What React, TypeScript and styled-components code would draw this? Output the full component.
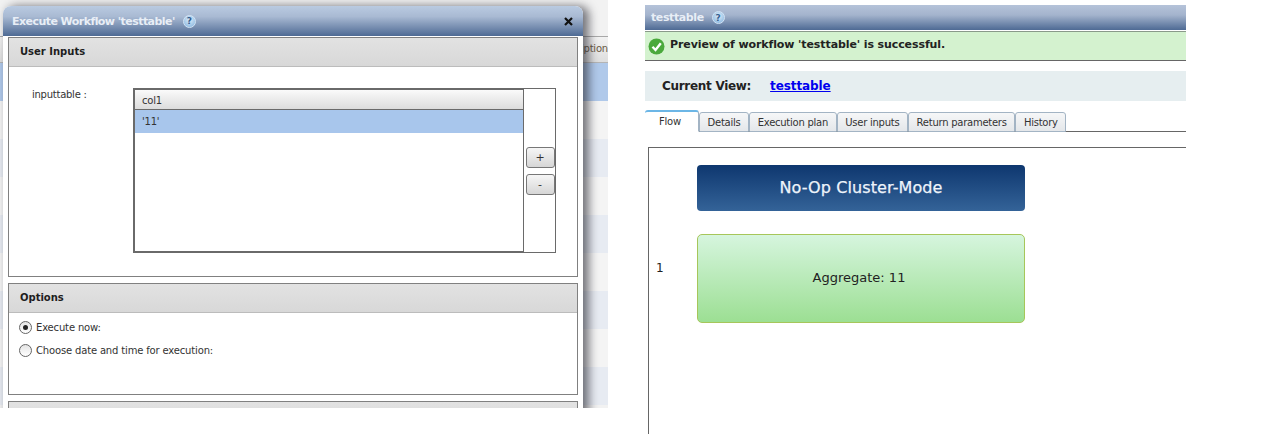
import styled, { createGlobalStyle } from "styled-components";

const Global = createGlobalStyle`
    html, body {
        margin: 0;
        padding: 0;
        background: #fff;
    }
    body {
        width: 1274px;
        height: 442px;
        overflow: hidden;
        font-family: "DejaVu Sans", Verdana, sans-serif;
        font-size: 10px;
        color: #222;
    }
`;

const Page = styled.div`
    display: flex;
    width: 1274px;
    height: 442px;
    overflow: hidden;
`;

const Stage = styled.div`
    position: relative;
    flex: none;
    width: 608px;
    height: 408px;
    overflow: hidden;
    background: #f2f2f2;
`;

const BackHeader = styled.div`
    height: 25px;
    margin-top: 36px;
    border-top: 1px solid #a8a8a8;
    border-bottom: 1px solid #b4b4b4;
    background: linear-gradient(#f2f2f2, #dedede);
    text-align: right;
    line-height: 24px;
    color: #6b5a45;
    letter-spacing: -0.2px;
    white-space: nowrap;
    overflow: hidden;
`;

const BackRow = styled.div<{ $tone: string }>`
    height: 38px;
    background: ${(p) => p.$tone};
`;

const Dialog = styled.div`
    position: absolute;
    left: 3px;
    top: 6px;
    width: 580px;
    height: 440px;
    background: #fff;
    border-radius: 8px 8px 0 0;
    box-shadow: 5px 1px 10px 1px rgba(40, 40, 50, 0.62);
`;

const DialogBar = styled.div`
    display: flex;
    align-items: center;
    height: 30px;
    padding: 0 9px;
    border-radius: 8px 8px 0 0;
    background: linear-gradient(#b9cae1, #a9bad3 35%, #4e6a94);
`;

const DialogTitle = styled.span`
    font-size: 11px;
    font-weight: bold;
    color: #e8eef6;
    letter-spacing: -0.55px;
`;

const SideTitle = styled(DialogTitle)`
    letter-spacing: -0.4px;
`;

const HelpIcon = styled.span`
    display: inline-flex;
    align-items: center;
    justify-content: center;
    width: 11px;
    height: 11px;
    margin-left: 8px;
    border-radius: 50%;
    border: 1px solid #d2e4f5;
    background: radial-gradient(circle at 50% 35%, #dcecf9, #7fb0dd);
    color: #35608f;
    font-size: 9px;
    font-weight: bold;
`;

const CloseIcon = styled.svg`
    margin-left: auto;
    margin-right: 1px;
`;

const DialogBody = styled.div`
    display: flex;
    flex-direction: column;
    gap: 6px;
    padding: 1px 5px 0;
`;

const Panel = styled.section<{ $height: number }>`
    flex: none;
    height: ${(p) => p.$height}px;
    box-sizing: border-box;
    border: 1px solid #808080;
    background: #fff;
`;

const PanelHead = styled.div`
    height: 28px;
    padding-left: 11px;
    border-bottom: 1px solid #bcbcbc;
    background: linear-gradient(#e2e2e2, #d8d8d8);
    font-size: 10px;
    font-weight: bold;
    line-height: 27px;
    color: #1e1e1e;
`;

const InputRow = styled.div`
    display: flex;
    padding: 21px 0 0 23px;
`;

const InputLabel = styled.span`
    flex: none;
    width: 101px;
    line-height: 13px;
    letter-spacing: -0.25px;
    color: #333;
`;

const Grid = styled.div`
    flex: none;
    width: 390px;
    height: 165px;
    box-sizing: border-box;
    border: 2px solid #6a6a6a;
    border-right: none;
`;

const GridHead = styled.div`
    height: 19px;
    padding-left: 7px;
    border-bottom: 1px solid #6a6a6a;
    background: linear-gradient(#fafafa, #dcdcdc);
    line-height: 21px;
    letter-spacing: -0.2px;
    color: #333;
`;

const GridRow = styled.div`
    height: 23px;
    padding-left: 7px;
    background: #a8c6ec;
    line-height: 23px;
    letter-spacing: -0.2px;
    color: #333;
`;

const GridSide = styled.div`
    display: flex;
    flex-direction: column;
    align-items: center;
    gap: 6px;
    flex: none;
    width: 33px;
    height: 165px;
    box-sizing: border-box;
    padding: 58px 0 0 1px;
    border: 1px solid #6a6a6a;
`;

const SmallButton = styled.button`
    width: 29px;
    height: 21px;
    padding: 0;
    border: 1px solid #777;
    border-radius: 3px;
    background: linear-gradient(#f6f6f6, #d6d6d6);
    font-family: inherit;
    font-size: 11px;
    color: #333;
`;

const OptionList = styled.div`
    display: flex;
    flex-direction: column;
    gap: 10px;
    padding: 8px 0 0 10px;
`;

const OptionRow = styled.label`
    display: flex;
    align-items: center;
    gap: 4px;
    height: 13px;
    letter-spacing: -0.16px;
    color: #333;
`;

const Radio = styled.span<{ $on?: boolean }>`
    display: flex;
    align-items: center;
    justify-content: center;
    width: 11px;
    height: 11px;
    border: 1px solid #666;
    border-radius: 50%;
    background: linear-gradient(#e4e4e4, #fff);

    &::after {
        content: "";
        width: 5px;
        height: 5px;
        border-radius: 50%;
        background: ${(p) => (p.$on ? "#222" : "transparent")};
    }
`;

const Side = styled.div`
    display: flex;
    flex-direction: column;
    flex: none;
    width: 541px;
    height: 434px;
    margin-left: 37px;
    padding-top: 5px;
    box-sizing: border-box;
    overflow: hidden;
`;

const TitleBar = styled.div`
    display: flex;
    align-items: center;
    flex: none;
    height: 25px;
    padding: 0 6px;
    background: linear-gradient(#b5c3d9, #a4b4cd 40%, #4e6a94);
`;

const Notice = styled.div`
    display: flex;
    align-items: center;
    flex: none;
    height: 30px;
    margin-top: 1px;
    padding-left: 3px;
    box-sizing: border-box;
    border-top: 1px solid #8a9a8a;
    border-bottom: 1px solid #666;
    background: #d4f2cf;
    font-size: 11px;
    font-weight: bold;
    letter-spacing: -0.1px;
    color: #222;
`;

const NoticeIcon = styled.svg`
    flex: none;
    margin-right: 5px;
`;

const NoticeText = styled.span`
    margin-bottom: 4px;
`;

const ViewBar = styled.div`
    display: flex;
    align-items: center;
    flex: none;
    height: 30px;
    margin-top: 10px;
    padding-left: 17px;
    background: #e6eef0;
    font-size: 12px;
    font-weight: bold;
    letter-spacing: -0.3px;
    color: #222;
`;

const ViewLink = styled.a`
    margin-left: 19px;
    letter-spacing: -0.1px;
    color: #0000ee;
    text-decoration: underline;
`;

const TabStrip = styled.div`
    display: flex;
    align-items: flex-end;
    flex: none;
    height: 22px;
    margin-top: 9px;
    border-bottom: 1px solid #666;
    box-sizing: border-box;
`;

const Tab = styled.div<{ $active?: boolean }>`
    display: flex;
    align-items: center;
    justify-content: center;
    flex: none;
    width: ${(p) => (p.$active ? "54px" : "auto")};
    height: ${(p) => (p.$active ? "22px" : "20px")};
    padding: ${(p) => (p.$active ? "0 3px 0 0" : "0 7.6px")};
    box-sizing: border-box;
    margin-bottom: -1px;
    border: 1px solid #a3b4c4;
    border-left: ${(p) => (p.$active ? "none" : "1px solid #a3b4c4")};
    border-top: ${(p) => (p.$active ? "2px solid #6cb6e6" : "1px solid #a3b4c4")};
    border-bottom: ${(p) => (p.$active ? "1px solid #fff" : "1px solid #a3b4c4")};
    border-radius: 3px 3px 0 0;
    background: ${(p) => (p.$active ? "#fff" : "linear-gradient(#f6f7f8, #e4e7ea)")};
    letter-spacing: -0.25px;
    color: #333;
    white-space: nowrap;
`;

const FlowBox = styled.div`
    display: flex;
    flex: 1;
    margin: 15px -2px 0 3px;
    border: 1px solid #666;
    border-bottom: none;
`;

const RowNumber = styled.div`
    flex: none;
    width: 48px;
    padding: 114px 0 0 7px;
    box-sizing: border-box;
    font-size: 12px;
    line-height: 13px;
    color: #222;
`;

const Nodes = styled.div`
    display: flex;
    flex-direction: column;
    gap: 23px;
    padding-top: 17px;
`;

const ClusterNode = styled.div`
    display: flex;
    align-items: center;
    justify-content: center;
    width: 328px;
    height: 46px;
    padding-bottom: 2px;
    box-sizing: border-box;
    border-radius: 4px;
    background: linear-gradient(#0e376f, #346398);
    font-size: 16px;
    letter-spacing: 0.1px;
    color: #eef4fb;
    -webkit-text-stroke: 0.25px #eef4fb;
`;

const AggregateNode = styled.div`
    display: flex;
    align-items: center;
    justify-content: center;
    width: 328px;
    height: 89px;
    padding: 0 4px 2px 0;
    box-sizing: border-box;
    border: 1px solid #a6c65a;
    border-radius: 5px;
    background: linear-gradient(#d6f5de, #9cdf93);
    font-size: 13px;
    color: #222;
`;

const tabs = ["Details", "Execution plan", "User inputs", "Return parameters", "History"];
const rows = ["#b0c9ea", "#f4f4f4", "#e7ebf2", "#f4f4f4", "#e7ebf2", "#f4f4f4", "#e7ebf2", "#f4f4f4", "#e7ebf2"];

const App = () => {
    return (
        <>
            <Global />
            <Page>
                <Stage>
                    <BackHeader>iption</BackHeader>
                    {rows.map((tone, i) => (
                        <BackRow key={i} $tone={tone} />
                    ))}
                    <Dialog>
                        <DialogBar>
                            <DialogTitle>Execute Workflow 'testtable'</DialogTitle>
                            <HelpIcon>?</HelpIcon>
                            <CloseIcon width="9" height="9" viewBox="0 0 9 9">
                                <path d="M1 1 L8 8 M8 1 L1 8" stroke="#111" strokeWidth="2.2" />
                            </CloseIcon>
                        </DialogBar>
                        <DialogBody>
                            <Panel $height={240}>
                                <PanelHead>User Inputs</PanelHead>
                                <InputRow>
                                    <InputLabel>inputtable :</InputLabel>
                                    <Grid>
                                        <GridHead>col1</GridHead>
                                        <GridRow>'11'</GridRow>
                                    </Grid>
                                    <GridSide>
                                        <SmallButton>+</SmallButton>
                                        <SmallButton>-</SmallButton>
                                    </GridSide>
                                </InputRow>
                            </Panel>
                            <Panel $height={112}>
                                <PanelHead>Options</PanelHead>
                                <OptionList>
                                    <OptionRow>
                                        <Radio $on />
                                        Execute now:
                                    </OptionRow>
                                    <OptionRow>
                                        <Radio />
                                        Choose date and time for execution:
                                    </OptionRow>
                                </OptionList>
                            </Panel>
                            <Panel $height={40}>
                                <PanelHead />
                            </Panel>
                        </DialogBody>
                    </Dialog>
                </Stage>
                <Side>
                    <TitleBar>
                        <SideTitle>testtable</SideTitle>
                        <HelpIcon>?</HelpIcon>
                    </TitleBar>
                    <Notice>
                        <NoticeIcon width="17" height="17" viewBox="0 0 17 17">
                            <circle cx="8.5" cy="8.5" r="8" fill="#4aa93c" />
                            <path d="M4.5 8.8 L7.5 12 L12.8 5.2" fill="none" stroke="#fff" strokeWidth="2.4" />
                        </NoticeIcon>
                        <NoticeText>Preview of workflow 'testtable' is successful.</NoticeText>
                    </Notice>
                    <ViewBar>
                        Current View:
                        <ViewLink href="#">testtable</ViewLink>
                    </ViewBar>
                    <TabStrip>
                        <Tab $active>Flow</Tab>
                        {tabs.map((name) => (
                            <Tab key={name}>{name}</Tab>
                        ))}
                    </TabStrip>
                    <FlowBox>
                        <RowNumber>1</RowNumber>
                        <Nodes>
                            <ClusterNode>No-Op Cluster-Mode</ClusterNode>
                            <AggregateNode>Aggregate: 11</AggregateNode>
                        </Nodes>
                    </FlowBox>
                </Side>
            </Page>
        </>
    );
};

export default App;
